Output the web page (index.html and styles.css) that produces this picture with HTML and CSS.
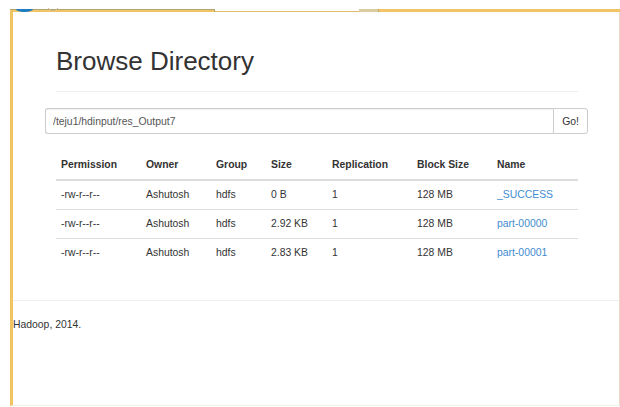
FILE: index.html
```html
<!DOCTYPE html>
<html lang="en">
<head>
<meta charset="utf-8">
<title>Browse Directory</title>
<link rel="stylesheet" href="styles.css">
</head>
<body>
<div class="chrome">
  <span class="chrome-dot"></span>
  <span class="chrome-ring"></span>
</div>
<div class="window">
  <div class="topbar">
    <span class="seg seg-tab"></span>
    <span class="seg seg-gap"></span>
    <span class="seg seg-handle"></span>
    <span class="seg seg-fill"></span>
  </div>
  <div class="page">
    <div class="page-header">
      <h1 class="title">Browse Directory</h1>
    </div>
    <form class="path-form" onsubmit="return false">
      <input class="path-input" type="text" value="/teju1/hdinput/res_Output7">
      <button class="path-go" type="button">Go!</button>
    </form>
    <table class="listing">
      <thead>
        <tr>
          <th class="c-perm">Permission</th>
          <th class="c-owner">Owner</th>
          <th class="c-group">Group</th>
          <th class="c-size">Size</th>
          <th class="c-repl">Replication</th>
          <th class="c-block">Block Size</th>
          <th class="c-name">Name</th>
        </tr>
      </thead>
      <tbody>
        <tr>
          <td>-rw-r--r--</td><td>Ashutosh</td><td>hdfs</td><td>0 B</td><td>1</td><td>128 MB</td><td><a href="#">_SUCCESS</a></td>
        </tr>
        <tr>
          <td>-rw-r--r--</td><td>Ashutosh</td><td>hdfs</td><td>2.92 KB</td><td>1</td><td>128 MB</td><td><a href="#">part-00000</a></td>
        </tr>
        <tr>
          <td>-rw-r--r--</td><td>Ashutosh</td><td>hdfs</td><td>2.83 KB</td><td>1</td><td>128 MB</td><td><a href="#">part-00001</a></td>
        </tr>
      </tbody>
    </table>
    <footer class="footer">
      <p class="copy">Hadoop, 2014.</p>
    </footer>
  </div>
</div>
</body>
</html>
```

FILE: styles.css
```css
html, body {
  margin: 0;
  padding: 0;
  background: #fff;
}

body {
  width: 620px;
  height: 407px;
  overflow: hidden;
  font-family: "Liberation Sans", Arial, sans-serif;
  font-size: 10.4px;
  color: #333;
  position: relative;
}

/* strip above the window frame */
.chrome {
  height: 9px;
  position: relative;
}

.chrome-dot {
  position: absolute;
  left: 16px;
  top: 9px;
  width: 17px;
  height: 3px;
  background: #1c7cc4;
  border-radius: 0 0 8px 8px / 0 0 3px 3px;
  z-index: 2;
}

.chrome-ring {
  position: absolute;
  left: 48px;
  top: 8px;
  width: 8px;
  height: 2px;
  border: 1px solid #c9b98c;
  border-top: none;
  border-radius: 0 0 5px 5px / 0 0 3px 3px;
  z-index: 2;
}

/* window frame */
.window {
  margin-left: 10px;
  width: 606px;
  height: 396px;
  border-left: 3px solid #f0c462;
  border-right: 1px solid #e6dcc0;
  border-bottom: 1px solid #f4f0e2;
  display: flex;
  flex-direction: column;
}

.topbar {
  display: flex;
  height: 3px;
  flex: none;
  margin-left: -3px;
  margin-right: -1px;
}

.seg {
  display: block;
  height: 3px;
  box-sizing: border-box;
}

.seg-tab {
  width: 205px;
  background: #f1c566;
  border-top: 1px solid #b7a571;
  border-right: 1px solid #b9a46a;
}

.seg-gap {
  width: 144px;
  background: #fff;
  border-bottom: 1px solid #e2bf6c;
}

.seg-handle {
  width: 20px;
  background: #dccaa0;
  border-right: 1px solid #c2a869;
}

.seg-fill {
  flex: 1;
  background: #f1c566;
}

/* page content */
.page {
  flex: 1;
  display: flex;
  flex-direction: column;
}

.page-header {
  margin: 34px 41px 0 43px;
  padding-bottom: 15px;
  border-bottom: 1px solid #eee;
}

.title {
  margin: 0;
  font-size: 26px;
  line-height: 30px;
  font-weight: 400;
  color: #333;
}

.path-form {
  display: flex;
  margin: 16px 31px 0 32px;
  height: 26px;
}

.path-input {
  flex: 1;
  box-sizing: border-box;
  height: 26px;
  margin: 0;
  padding: 0 7px;
  border: 1px solid #ccc;
  border-right: none;
  border-radius: 3px 0 0 3px;
  font-family: inherit;
  font-size: 10.4px;
  color: #555;
  box-shadow: inset 0 1px 1px rgba(0, 0, 0, 0.06);
  outline: none;
}

.path-go {
  box-sizing: border-box;
  width: 35px;
  height: 26px;
  margin: 0;
  padding: 0;
  border: 1px solid #ccc;
  border-radius: 0 3px 3px 0;
  background: #fff;
  font-family: inherit;
  font-size: 10.4px;
  color: #333;
}

.listing {
  margin: 17px 41px 0 43px;
  width: 522px;
  border-collapse: collapse;
  table-layout: fixed;
}

.listing th,
.listing td {
  padding: 0 5px;
  text-align: left;
  vertical-align: middle;
  line-height: 14px;
}

.listing th {
  height: 28px;
  font-weight: 700;
  border-bottom: 2px solid #ddd;
}

.listing td {
  height: 28px;
  border-top: 1px solid #ddd;
}

.c-perm { width: 75px; }
.c-owner { width: 60px; }
.c-group { width: 45px; }
.c-size { width: 51px; }
.c-repl { width: 75px; }
.c-block { width: 70px; }

.listing a {
  color: #3f8ccf;
  text-decoration: none;
}

.footer {
  margin-top: 33px;
  border-top: 1px solid #eee;
  padding-top: 17px;
}

.copy {
  margin: 0;
  line-height: 14px;
  color: #333;
}
```
